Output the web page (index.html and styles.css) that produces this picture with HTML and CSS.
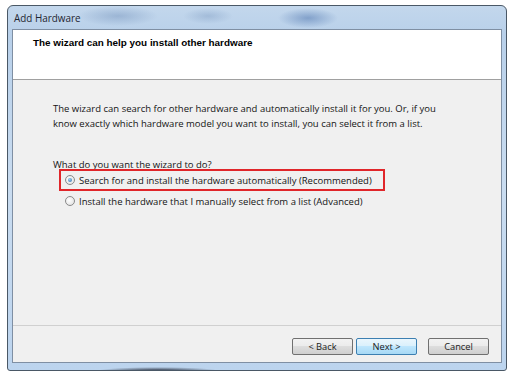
FILE: index.html
```html
<!DOCTYPE html>
<html>
<head>
<meta charset="utf-8">
<link rel="stylesheet" href="styles.css">
</head>
<body>
<div class="window">
  <div class="titlebar"><span class="title">Add Hardware</span></div>
  <div class="client">
    <div class="header">
      <div class="header-text">The wizard can help you install other hardware</div>
    </div>
    <div class="content">
      <p class="intro">The wizard can search for other hardware and automatically install it for you. Or, if you<br>know exactly which hardware model you want to install, you can select it from a list.</p>
      <p class="question">What do you want the wizard to do?</p>
      <div class="options">
        <label class="option highlighted"><span class="radio checked"></span>Search for and install the hardware automatically (Recommended)</label>
        <label class="option"><span class="radio"></span>Install the hardware that I manually select from a list (Advanced)</label>
      </div>
    </div>
    <div class="footer">
      <button class="btn">&lt; Back</button>
      <button class="btn primary">Next &gt;</button>
      <button class="btn cancel">Cancel</button>
    </div>
  </div>
</div>
</body>
</html>
```

FILE: styles.css
```css
html, body {
  margin: 0;
  padding: 0;
  background: #ffffff;
}
body {
  font-family: "Open Sans", "Noto Sans", sans-serif;
  font-size: 9.5px;
  color: #141414;
}
.window {
  margin: 5px 0 0 7px;
  width: 490px;
  height: 357px;
  border: 1px solid #4a5866;
  border-radius: 6px 6px 3px 3px;
  background:
    radial-gradient(ellipse 62px 4px at 150px 365px, rgba(20,25,40,0.95), rgba(20,25,40,0) 100%),
    radial-gradient(ellipse 40px 10px at 110px 10px, rgba(120,150,190,0.5), rgba(120,150,190,0) 100%),
    radial-gradient(ellipse 30px 10px at 300px 12px, rgba(70,110,170,0.5), rgba(70,110,170,0) 100%),
    radial-gradient(ellipse 25px 8px at 200px 10px, rgba(120,150,190,0.4), rgba(120,150,190,0) 100%),
    linear-gradient(180deg, #c3d7ec 0%, #b8d0ea 8%, #c9dcf0 50%, #bcd4ee 100%);
  display: flex;
  flex-direction: column;
  padding: 0 4px 7px 4px;
}
.titlebar {
  height: 23px;
  display: flex;
  align-items: center;
  padding-left: 2px;
}
.title {
  font-size: 9.9px;
  color: #1e2530;
  margin-top: 1px;
}
.client {
  flex: 1;
  border: 1px solid #7f8fa3;
  background: #f0f0f0;
  display: flex;
  flex-direction: column;
}
.header {
  height: 49px;
  background: #ffffff;
  border-bottom: 1px solid #a0a0a0;
}
.header-text {
  font-family: "Liberation Sans", Arial, sans-serif;
  font-weight: bold;
  font-size: 9.9px;
  color: #000;
  padding: 7px 0 0 20px;
}
.content {
  flex: 1;
  padding: 21px 0 0 40px;
}
.intro {
  margin: 0;
  line-height: 15px;
  white-space: nowrap;
}
.question {
  margin: 26px 0 0 0;
  line-height: 15px;
}
.options {
  margin-top: 0;
  display: flex;
  flex-direction: column;
}
.option {
  display: flex;
  align-items: center;
  height: 18px;
  padding-left: 12px;
  width: 326px;
  box-sizing: border-box;
}
.option + .option {
  margin-top: 3px;
}
.option.highlighted {
  outline: 2px solid #e0262a;
  outline-offset: 0;
  margin-left: 8px;
  padding-left: 4px;
  width: 322px;
  margin-top: -1px;
}
.radio {
  width: 8px;
  height: 8px;
  border-radius: 50%;
  border: 1px solid #8a8a8a;
  background: radial-gradient(circle at 40% 40%, #ffffff, #dcdcdc);
  margin-right: 4px;
  flex: none;
  position: relative;
}
.radio.checked::after {
  content: "";
  position: absolute;
  left: 2px;
  top: 2px;
  width: 4px;
  height: 4px;
  border-radius: 50%;
  background: radial-gradient(circle at 40% 35%, #9fd0f2, #2a6aa8);
}
.footer {
  border-top: 1px solid #d0d0d0;
  height: 37px;
  display: flex;
  align-items: flex-start;
  justify-content: flex-end;
  padding: 12px 12px 0 0;
  box-sizing: border-box;
  gap: 3px;
}
.btn {
  width: 61px;
  height: 17px;
  font-family: "Open Sans", sans-serif;
  font-size: 9.3px;
  color: #1a1a1a;
  border: 1px solid #707070;
  border-radius: 2px;
  background: linear-gradient(180deg, #f2f2f2 0%, #ebebeb 49%, #dddddd 50%, #cfcfcf 100%);
  padding: 0;
  line-height: 15px;
}
.btn.primary {
  border-color: #3c7fb1;
  background: linear-gradient(180deg, #eaf6fd 0%, #d9f0fc 49%, #bee6fd 50%, #a7d9f5 100%);
}
.btn.cancel {
  margin-left: 8px;
}
```
